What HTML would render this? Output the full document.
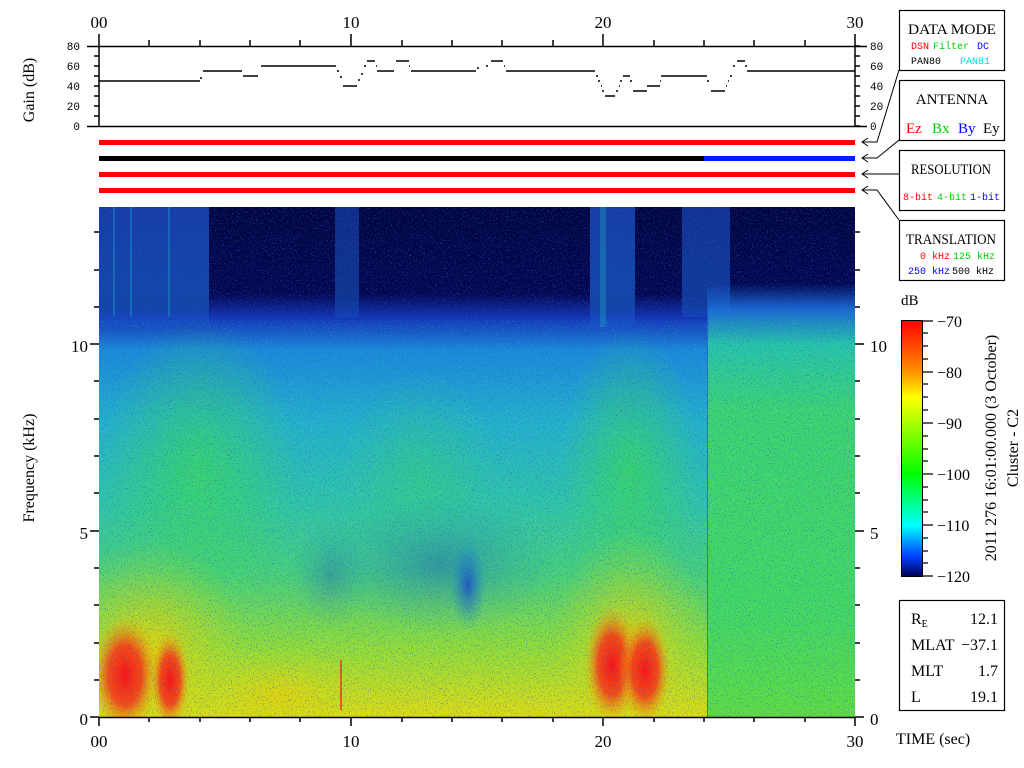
<!DOCTYPE html>
<html><head><meta charset="utf-8"><style>
html,body{margin:0;padding:0;background:#fff;width:1024px;height:768px;overflow:hidden}
svg{display:block}
text{font-family:"Liberation Serif",serif;fill:#000}
.m{font-family:"Liberation Mono",monospace}
</style></head><body>
<svg width="1024" height="768" viewBox="0 0 1024 768" xmlns="http://www.w3.org/2000/svg">
<defs>
<linearGradient id="gL" x1="0" y1="207" x2="0" y2="717" gradientUnits="userSpaceOnUse">
<stop offset="0" stop-color="#020640"/>
<stop offset="0.17" stop-color="#030850"/>
<stop offset="0.22" stop-color="#1438b8"/>
<stop offset="0.28" stop-color="#1a88d8"/>
<stop offset="0.42" stop-color="#24b0cc"/>
<stop offset="0.58" stop-color="#30c4a8"/>
<stop offset="0.72" stop-color="#48d078"/>
<stop offset="0.86" stop-color="#90dc38"/>
<stop offset="1" stop-color="#e0dc10"/>
</linearGradient>
<linearGradient id="gR" x1="0" y1="207" x2="0" y2="717" gradientUnits="userSpaceOnUse">
<stop offset="0" stop-color="#020640"/>
<stop offset="0.15" stop-color="#030850"/>
<stop offset="0.2" stop-color="#1a68d0"/>
<stop offset="0.27" stop-color="#28c4a8"/>
<stop offset="0.4" stop-color="#3cd470"/>
<stop offset="0.8" stop-color="#44d860"/>
<stop offset="1" stop-color="#60dc40"/>
</linearGradient>
<linearGradient id="streak" x1="0" y1="207" x2="0" y2="330" gradientUnits="userSpaceOnUse">
<stop offset="0" stop-color="#1a4ac0" stop-opacity="0.8"/><stop offset="0.7" stop-color="#1a60d0" stop-opacity="0.7"/><stop offset="1" stop-color="#1a8ee0" stop-opacity="0"/>
</linearGradient>
<radialGradient id="red"><stop offset="0" stop-color="#ff1010"/><stop offset="0.5" stop-color="#ff3010" stop-opacity="0.85"/><stop offset="1" stop-color="#f0c000" stop-opacity="0"/></radialGradient>
<radialGradient id="yel"><stop offset="0" stop-color="#f0d000" stop-opacity="0.85"/><stop offset="1" stop-color="#c0e020" stop-opacity="0"/></radialGradient>
<radialGradient id="blu"><stop offset="0" stop-color="#1030d0" stop-opacity="0.7"/><stop offset="1" stop-color="#1080e0" stop-opacity="0"/></radialGradient>
<radialGradient id="grn"><stop offset="0" stop-color="#40e040" stop-opacity="0.6"/><stop offset="1" stop-color="#40e040" stop-opacity="0"/></radialGradient>
<linearGradient id="cb" x1="0" y1="320" x2="0" y2="577" gradientUnits="userSpaceOnUse">
<stop offset="0" stop-color="#ff0000"/><stop offset="0.2" stop-color="#ff9000"/><stop offset="0.3" stop-color="#ffff00"/>
<stop offset="0.6" stop-color="#00ff00"/><stop offset="0.8" stop-color="#00ffff"/><stop offset="0.92" stop-color="#0040ff"/><stop offset="1" stop-color="#000050"/>
</linearGradient>
<filter id="nz" x="0" y="0" width="1" height="1"><feTurbulence type="fractalNoise" baseFrequency="0.95 0.6" numOctaves="1" seed="3"/><feColorMatrix values="0 0 0 0 0.02  0 0 0 0 0.1  0 0 0 0 0.7  0 0 0 3 -1.7"/></filter>
<filter id="nz2" x="0" y="0" width="1" height="1"><feTurbulence type="fractalNoise" baseFrequency="0.9 0.7" numOctaves="1" seed="9"/><feColorMatrix values="0 0 0 0 0.1  0 0 0 0 0.95  0 0 0 0 0.4  0 0 0 3 -1.8"/></filter>
<clipPath id="sp"><rect x="99" y="207" width="756" height="510"/></clipPath>
</defs>

<!-- spectrogram -->
<g clip-path="url(#sp)">
<rect x="99" y="207" width="609" height="510" fill="url(#gL)"/>
<rect x="707" y="207" width="148" height="510" fill="url(#gR)"/>
<rect x="99" y="207" width="110" height="120" fill="url(#streak)"/>
<rect x="335" y="207" width="24" height="110" fill="url(#streak)" opacity="0.7"/>
<rect x="590" y="207" width="45" height="120" fill="url(#streak)"/>
<rect x="682" y="207" width="48" height="110" fill="url(#streak)" opacity="0.8"/>
<rect x="113" y="207" width="2" height="110" fill="#20b0d0" opacity="0.35"/>
<rect x="130" y="207" width="2" height="110" fill="#20b0d0" opacity="0.35"/>
<rect x="168" y="207" width="2" height="110" fill="#20b0d0" opacity="0.35"/>
<rect x="600" y="207" width="6" height="120" fill="#20c0c0" opacity="0.3"/>
<ellipse cx="200" cy="470" rx="100" ry="150" fill="url(#grn)"/>
<ellipse cx="630" cy="470" rx="70" ry="140" fill="url(#grn)"/>
<ellipse cx="420" cy="470" rx="80" ry="100" fill="url(#grn)" opacity="0.5"/>
<ellipse cx="440" cy="565" rx="120" ry="70" fill="url(#blu)" opacity="0.5"/>
<ellipse cx="468" cy="585" rx="18" ry="45" fill="url(#blu)"/>
<ellipse cx="330" cy="575" rx="40" ry="55" fill="url(#blu)" opacity="0.4"/>
<ellipse cx="150" cy="650" rx="100" ry="110" fill="url(#yel)"/>
<ellipse cx="630" cy="650" rx="80" ry="120" fill="url(#yel)"/>
<ellipse cx="280" cy="695" rx="100" ry="50" fill="url(#yel)" opacity="0.8"/>
<ellipse cx="125" cy="675" rx="34" ry="60" fill="url(#red)"/>
<ellipse cx="170" cy="680" rx="20" ry="50" fill="url(#red)"/>
<ellipse cx="612" cy="665" rx="28" ry="60" fill="url(#red)"/>
<ellipse cx="645" cy="670" rx="26" ry="55" fill="url(#red)"/>
<rect x="340" y="660" width="2" height="50" fill="#ff2010" opacity="0.7"/>
<rect x="707" y="300" width="1" height="417" fill="#1a40c0" opacity="0.6"/>
<rect x="99" y="207" width="756" height="510" filter="url(#nz)"/>
<rect x="99" y="320" width="756" height="397" filter="url(#nz2)" opacity="0.6"/>
</g>

<!-- spectrogram axes -->
<g stroke="#000" stroke-width="1.5" fill="none">
<line x1="99" y1="717.5" x2="855" y2="717.5"/>
<path d="M99 717V726M351 717V726M603 717V726M855 717V726"/>
<path d="M149 717V722M200 717V722M250 717V722M300 717V722M402 717V722M452 717V722M502 717V722M553 717V722M654 717V722M704 717V722M754 717V722M805 717V722"/>
<path d="M90 717H99M90 531H99M90 344H99M855 717H864M855 531H864M855 344H864"/>
<path d="M94 680H99M94 643H99M94 605H99M94 568H99M94 493H99M94 456H99M94 419H99M94 381H99M94 307H99M94 270H99M94 232H99"/>
<path d="M855 680H860M855 643H860M855 605H860M855 568H860M855 493H860M855 456H860M855 419H860M855 381H860M855 307H860M855 270H860M855 232H860"/>
</g>
<g font-size="16">
<text x="88" y="725" text-anchor="end" font-size="17">0</text>
<text x="88" y="539" text-anchor="end" font-size="17">5</text>
<text x="88" y="352" text-anchor="end" font-size="17">10</text>
<text x="870" y="725" font-size="17">0</text>
<text x="870" y="539" font-size="17">5</text>
<text x="870" y="352" font-size="17">10</text>
<text x="99" y="747" text-anchor="middle" font-size="17">00</text>
<text x="351" y="747" text-anchor="middle" font-size="17">10</text>
<text x="603" y="747" text-anchor="middle" font-size="17">20</text>
<text x="855" y="747" text-anchor="middle" font-size="17">30</text>
<text x="99" y="28" text-anchor="middle" font-size="17">00</text>
<text x="351" y="28" text-anchor="middle" font-size="17">10</text>
<text x="603" y="28" text-anchor="middle" font-size="17">20</text>
<text x="855" y="28" text-anchor="middle" font-size="17">30</text>
<text transform="translate(34,468) rotate(-90)" text-anchor="middle" font-size="16">Frequency (kHz)</text>
<text transform="translate(34,90) rotate(-90)" text-anchor="middle" font-size="16">Gain (dB)</text>
<text x="896" y="744" font-size="16">TIME (sec)</text>
</g>

<!-- gain panel -->
<g stroke="#000" stroke-width="1.5" fill="none">
<line x1="87" y1="46.5" x2="867" y2="46.5"/>
<line x1="87" y1="126.5" x2="867" y2="126.5"/>
<line x1="99" y1="34" x2="99" y2="127"/>
<line x1="855" y1="34" x2="855" y2="127"/>
<path d="M149 46V40M200 46V40M250 46V40M300 46V40M351 46V34M402 46V40M452 46V40M502 46V40M553 46V40M603 46V34M654 46V40M704 46V40M754 46V40M805 46V40"/>
<path d="M94 56H99M94 66H99M94 76H99M94 86H99M94 96H99M94 106H99M94 116H99M855 56H860M855 66H860M855 76H860M855 86H860M855 96H860M855 106H860M855 116H860M855 126H860M855 46H860"/>
<path d="M99 81H200M203 71H242M243 76H258M261 66H336M343 86H357M367 61H375M377 71H394M396 61H409M411 71H476M491 61H503M506 71H595M605 96H615M623 76H630M633 91H647M647 86H660M661 76H707M711 91H725M737 61H745M747 71H855"/>
<path d="M200 78H202M337 71H339M340 77H342M358 80H360M361 74H363M364 66H366M376 66H377M409 66H410M477 68H479M486 66H488M504 66H505M596 76H598M598 81H600M601 86H602M602 91H604M616 91H618M619 86H620M620 81H622M630 81H632M660 81H661M707 81H709M726 86H727M728 81H729M730 76H732M733 66H735M745 66H747"/>
</g>
<g class="m" font-size="11">
<text x="80" y="50" text-anchor="end" class="m">80</text>
<text x="80" y="70" text-anchor="end" class="m">60</text>
<text x="80" y="90" text-anchor="end" class="m">40</text>
<text x="80" y="110" text-anchor="end" class="m">20</text>
<text x="80" y="130" text-anchor="end" class="m">0</text>
<text x="870" y="50" class="m">80</text>
<text x="870" y="70" class="m">60</text>
<text x="870" y="90" class="m">40</text>
<text x="870" y="110" class="m">20</text>
<text x="870" y="130" class="m">0</text>
</g>

<!-- status bars -->
<rect x="99" y="140" width="756" height="5" fill="#ff0000"/>
<rect x="99" y="156" width="605" height="5" fill="#000"/>
<rect x="704" y="156" width="151" height="5" fill="#0020ff"/>
<rect x="99" y="172" width="756" height="5" fill="#ff0000"/>
<rect x="99" y="188" width="756" height="5" fill="#ff0000"/>

<!-- connector lines -->
<g stroke="#000" stroke-width="1" fill="none">
<path d="M899 70L877 142H862M868 138L862 142L868 146"/>
<path d="M899 140L877 158H862M868 154L862 158L868 162"/>
<path d="M899 174H862M868 170L862 174L868 178"/>
<path d="M899 220L877 190H862M868 186L862 190L868 194"/>
</g>

<!-- legend boxes -->
<g fill="none" stroke="#000" stroke-width="1.2">
<rect x="899.5" y="10.5" width="105" height="60"/>
<rect x="899.5" y="80.5" width="105" height="60"/>
<rect x="899.5" y="150.5" width="105" height="60"/>
<rect x="899.5" y="220.5" width="105" height="60"/>
<rect x="899.5" y="600.5" width="105" height="110"/>
</g>
<text x="952" y="34" text-anchor="middle" font-size="15" textLength="88" lengthAdjust="spacingAndGlyphs">DATA MODE</text>
<g class="m" font-size="10">
<text x="911" y="49" class="m" style="fill:#ff0000">DSN</text>
<text x="933" y="49" class="m" style="fill:#00d000">Filter</text>
<text x="977" y="49" class="m" style="fill:#0000ff">DC</text>
<text x="911" y="64" class="m">PAN80</text>
<text x="960" y="64" class="m" style="fill:#00e0e0">PAN81</text>
</g>
<text x="952" y="104" text-anchor="middle" font-size="15">ANTENNA</text>
<g font-size="15">
<text x="906" y="133" style="fill:#ff0000">Ez</text>
<text x="932" y="133" style="fill:#00d000">Bx</text>
<text x="958" y="133" style="fill:#0000ff">By</text>
<text x="983" y="133">Ey</text>
</g>
<text x="951" y="174" text-anchor="middle" font-size="15" textLength="80" lengthAdjust="spacingAndGlyphs">RESOLUTION</text>
<g class="m" font-size="10">
<text x="903" y="200" class="m" style="fill:#ff0000">8-bit</text>
<text x="937" y="200" class="m" style="fill:#00d000">4-bit</text>
<text x="970" y="200" class="m" style="fill:#0000ff">1-bit</text>
<text x="920" y="259" class="m" style="fill:#ff0000">0 kHz</text>
<text x="953" y="259" class="m" style="fill:#00d000">125 kHz</text>
<text x="908" y="274" class="m" style="fill:#0000ff">250 kHz</text>
<text x="952" y="274" class="m">500 kHz</text>
</g>
<text x="951" y="244" text-anchor="middle" font-size="15" textLength="90" lengthAdjust="spacingAndGlyphs">TRANSLATION</text>

<!-- colorbar -->
<text x="901" y="305" font-size="15">dB</text>
<rect x="901.5" y="320.5" width="21" height="256" fill="url(#cb)" stroke="#000" stroke-width="1"/>
<g stroke="#000" stroke-width="1.2">
<path d="M923 321H933M923 372H933M923 423H933M923 474H933M923 525H933M923 576H933"/>
<path d="M923 333H928M923 346H928M923 359H928M923 384H928M923 397H928M923 410H928M923 436H928M923 449H928M923 461H928M923 487H928M923 500H928M923 512H928M923 538H928M923 551H928M923 563H928"/>
</g>
<g font-size="16">
<text x="937" y="327">−70</text>
<text x="937" y="378">−80</text>
<text x="937" y="429">−90</text>
<text x="937" y="480">−100</text>
<text x="937" y="531">−110</text>
<text x="937" y="582">−120</text>
<text transform="translate(996,448) rotate(-90)" text-anchor="middle" font-size="16">2011 276 16:01:00.000 (3 October)</text>
<text transform="translate(1018,448) rotate(-90)" text-anchor="middle" font-size="16">Cluster - C2</text>
</g>

<!-- info box -->
<g font-size="16">
<text x="911" y="624">R<tspan font-size="10" dy="3">E</tspan></text>
<text x="998" y="624" text-anchor="end">12.1</text>
<text x="911" y="650">MLAT</text>
<text x="998" y="650" text-anchor="end">−37.1</text>
<text x="911" y="676">MLT</text>
<text x="998" y="676" text-anchor="end">1.7</text>
<text x="911" y="702">L</text>
<text x="998" y="702" text-anchor="end">19.1</text>
</g>
</svg>
</body></html>
